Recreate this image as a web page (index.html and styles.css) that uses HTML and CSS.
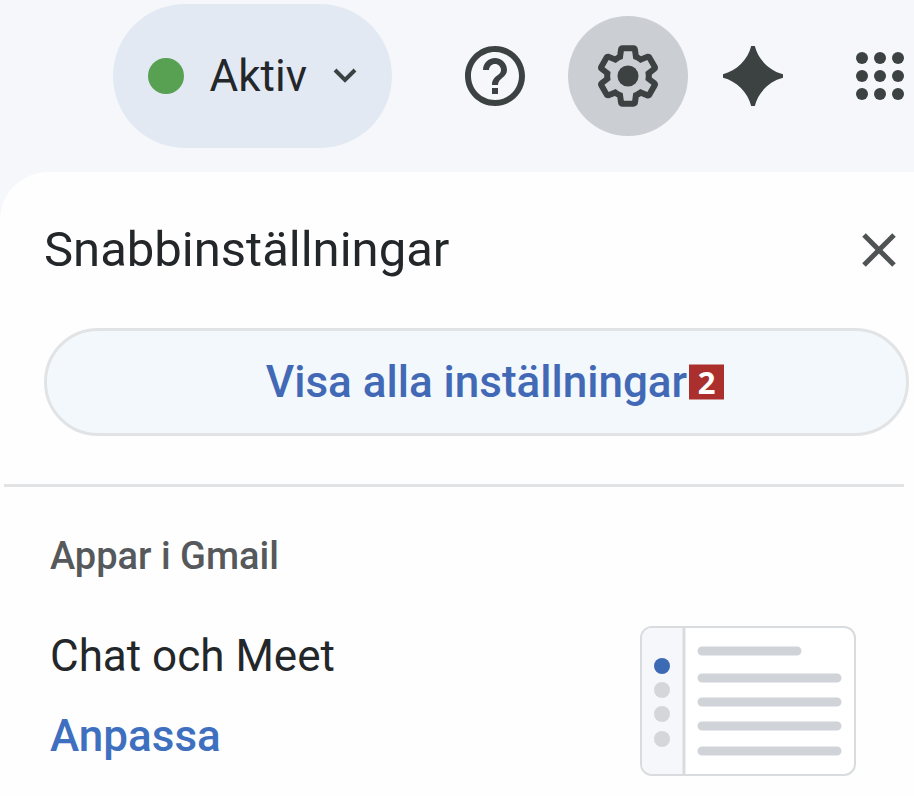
FILE: index.html
```html
<!DOCTYPE html>
<html lang="sv">
<head>
<meta charset="UTF-8" />
<meta name="viewport" content="width=device-width, initial-scale=1" />
<title>Snabbinställningar</title>
<link rel="stylesheet" href="styles.css">
</head>
<body>
<header class="topbar">
  <button class="status">
    <span class="status-dot"></span>
    <span>Aktiv</span>
    <svg class="chevron" viewBox="0 0 24 16" aria-hidden="true"><path d="M2 2l10 10L22 2" /></svg>
  </button>
  <button class="icon-btn help" aria-label="Support">
    <svg class="icon" viewBox="2 2 20 20" aria-hidden="true">
      <path d="M11 18h2v-2h-2v2zm1-16C6.48 2 2 6.48 2 12s4.48 10 10 10 10-4.48 10-10S17.52 2 12 2zm0 18c-4.41 0-8-3.59-8-8s3.59-8 8-8 8 3.59 8 8-3.59 8-8 8zm0-14c-2.21 0-4 1.79-4 4h2c0-1.1.9-2 2-2s2 .9 2 2c0 2-3 1.75-3 5h2c0-2.25 3-2.5 3-5 0-2.21-1.79-4-4-4z" />
    </svg>
  </button>
  <button class="icon-btn settings" aria-label="Inställningar">
    <svg class="icon" viewBox="2 2 20 20" aria-hidden="true">
      <path d="M13.85 22.25h-3.7c-.74 0-1.36-.54-1.45-1.27l-.27-1.89c-.27-.14-.53-.29-.79-.46l-1.8.72c-.7.26-1.47-.03-1.81-.65L2.2 15.53c-.35-.66-.2-1.44.36-1.88l1.53-1.19c-.01-.15-.02-.3-.02-.46 0-.15.01-.31.02-.46l-1.52-1.19c-.59-.45-.74-1.26-.37-1.88l1.85-3.19c.34-.62 1.11-.9 1.79-.63l1.81.73c.26-.17.52-.32.78-.46l.27-1.91c.09-.7.71-1.25 1.44-1.25h3.7c.74 0 1.36.54 1.45 1.27l.27 1.89c.27.14.53.29.79.46l1.8-.72c.71-.26 1.48.03 1.82.65l1.84 3.18c.36.66.2 1.44-.36 1.88l-1.52 1.19c.01.15.02.3.02.46s-.01.31-.02.46l1.52 1.19c.56.45.72 1.23.37 1.86l-1.86 3.22c-.34.62-1.11.9-1.8.63l-1.8-.72c-.26.17-.52.32-.78.46l-.27 1.91c-.1.68-.72 1.22-1.46 1.22zm-3.23-2h2.76l.37-2.55.53-.22c.44-.18.88-.44 1.34-.78l.45-.34 2.38.96 1.38-2.4-2.03-1.58.07-.56c.03-.26.06-.51.06-.78s-.03-.53-.06-.78l-.07-.56 2.03-1.58-1.39-2.4-2.39.96-.45-.35c-.42-.32-.87-.58-1.33-.77l-.52-.22-.37-2.55h-2.76l-.37 2.55-.53.21c-.44.19-.88.44-1.34.79l-.45.33-2.38-.95-1.39 2.39 2.03 1.58-.07.56a7 7 0 0 0-.06.79c0 .26.02.53.06.78l.07.56-2.03 1.58 1.38 2.4 2.39-.96.45.35c.43.33.86.58 1.33.77l.53.22.38 2.55z" />
      <circle cx="12" cy="12" r="3.5" />
    </svg>
  </button>
  <button class="icon-btn spark" aria-label="Gemini">
    <svg class="icon" viewBox="2 2 20 20" aria-hidden="true">
      <path d="M11.400 2h1.200C13.700 6.500 17.500 10.300 22 11.400v1.200C17.500 13.700 13.700 17.500 12.600 22h-1.200C10.300 17.500 6.500 13.700 2 12.600v-1.200C6.500 10.300 10.300 6.500 11.400 2z" />
    </svg>
  </button>
  <button class="icon-btn" aria-label="Appar">
    <svg class="icon" viewBox="2 2 20 20" aria-hidden="true">
      <circle cx="6" cy="6" r="2" /><circle cx="12" cy="6" r="2" /><circle cx="18" cy="6" r="2" />
      <circle cx="6" cy="12" r="2" /><circle cx="12" cy="12" r="2" /><circle cx="18" cy="12" r="2" />
      <circle cx="6" cy="18" r="2" /><circle cx="12" cy="18" r="2" /><circle cx="18" cy="18" r="2" />
    </svg>
  </button>
</header>

<main class="panel">
  <div class="panel-head">
    <h1>Snabbinställningar</h1>
    <button class="close" aria-label="Stäng">
      <svg viewBox="0 0 36 36" aria-hidden="true"><path d="M3 3l30 30M33 3L3 33" /></svg>
    </button>
  </div>
  <button class="all-settings">
    <span class="all-label">Visa alla inställningar<span class="badge">2</span></span>
  </button>

  <section class="apps">
    <h2>Appar i Gmail</h2>
    <div class="apps-row">
      <div class="apps-text">
        <p>Chat och Meet</p>
        <a href="#">Anpassa</a>
      </div>
      <svg class="preview" viewBox="0 0 216 150" aria-hidden="true">
        <rect class="preview-frame" x="1" y="1" width="214" height="148" rx="11" />
        <path class="preview-side" d="M44 2H12A10 10 0 0 0 2 12v126a10 10 0 0 0 10 10h32z" />
        <path class="preview-line" d="M44 1v148" />
        <circle class="preview-active" cx="22" cy="40" r="8" />
        <g class="preview-dots">
          <circle cx="22" cy="64" r="8" />
          <circle cx="22" cy="88" r="8" />
          <circle cx="22" cy="113" r="8" />
        </g>
        <path class="preview-rows" d="M62 25h95M62 52h135M62 76h135M62 100h135M62 125h135" />
      </svg>
    </div>
  </section>
</main>
</body>
</html>
```
FILE: styles.css
```css
:root {
  --bg-color: #f5f7fb;
  --panel-color: #fefefe;
  --text-color: #24272a;
  --icon-color: #3c4142;
  --line-color: #e1e3e5;
  --link-color: #3f70c0;
}
* {
  box-sizing: border-box;
}
body {
  margin: 0;
  min-height: 100vh;
  display: flex;
  flex-direction: column;
  background: var(--bg-color);
  color: var(--text-color);
  font-family: Roboto, "Liberation Sans", sans-serif;
}
button {
  border: none;
  padding: 0;
  background: transparent;
  color: inherit;
  font-family: inherit;
  cursor: pointer;
}
h1, h2, p {
  margin: 0;
  font-weight: 400;
}
svg {
  display: block;
}

/* Top bar */
.topbar {
  display: flex;
  align-items: center;
  justify-content: flex-end;
  gap: 35px;
  padding: 4px 4px 24px;
}
.status {
  display: flex;
  align-items: center;
  gap: 26px;
  height: 144px;
  padding: 0 35px;
  margin-right: 38px;
  border-radius: 72px;
  background: #e2e9f3;
  font-size: 44px;
}
.status-dot {
  width: 36px;
  height: 36px;
  border-radius: 50%;
  background: #58a052;
}
.chevron {
  width: 24px;
  height: 16px;
  fill: none;
  stroke: var(--icon-color);
  stroke-width: 4;
}
.icon-btn {
  flex: none;
}
.icon {
  width: 60px;
  height: 60px;
  overflow: visible;
  fill: var(--icon-color);
}
.help {
  margin-right: 8px;
}
.settings {
  padding: 30px;
  border-radius: 50%;
  background: #cbced2;
}
.spark {
  margin-right: 32px;
}

/* Quick settings */
.panel {
  flex: 1;
  border-radius: 48px 0 0 0;
  background: var(--panel-color);
}
.panel-head {
  display: flex;
  align-items: center;
  justify-content: space-between;
  padding: 48px 17px 48px 44px;
}
.panel-head h1 {
  font-size: 49px;
  line-height: 60px;
}
.close svg {
  width: 36px;
  height: 36px;
  fill: none;
  stroke: #505354;
  stroke-width: 5;
}
.all-settings {
  display: block;
  width: calc(100% - 49px);
  height: 108px;
  margin: 0 5px 48px 44px;
  border: 3px solid var(--line-color);
  border-radius: 54px;
  background: #f2f8fc;
  color: #4269b5;
  font-size: 44px;
  font-weight: 500;
}
.all-label {
  position: relative;
}
.badge {
  position: absolute;
  left: 100%;
  top: 50%;
  width: 35px;
  margin-left: 2px;
  transform: translateY(-50%);
  background: #ab302d;
  color: #fff;
  font: 700 31px/35px "Noto Sans", sans-serif;
  text-align: center;
}
.apps {
  margin: 0 10px 0 4px;
  padding: 47px 48px 0 46px;
  border-top: 3px solid var(--line-color);
}
.apps h2 {
  color: #55595b;
  font-size: 38px;
  font-weight: 500;
  line-height: 44px;
}
.apps-row {
  display: flex;
  justify-content: space-between;
  padding-top: 48px;
}
.apps-text {
  font-size: 44px;
  line-height: 60px;
}
.apps-text a {
  display: block;
  margin-top: 20px;
  color: var(--link-color);
  font-weight: 500;
  text-decoration: none;
}
.preview {
  flex: none;
  width: 216px;
  height: 150px;
}
.preview-frame {
  fill: #fff;
  stroke: #d9dcdf;
  stroke-width: 2;
}
.preview-side {
  fill: #f5f7fa;
}
.preview-line {
  stroke: #d9dcdf;
  stroke-width: 3;
}
.preview-active {
  fill: #3d6ab5;
}
.preview-dots {
  fill: #d4d6da;
}
.preview-rows {
  fill: none;
  stroke: #d0d4d9;
  stroke-width: 9;
  stroke-linecap: round;
}
```
